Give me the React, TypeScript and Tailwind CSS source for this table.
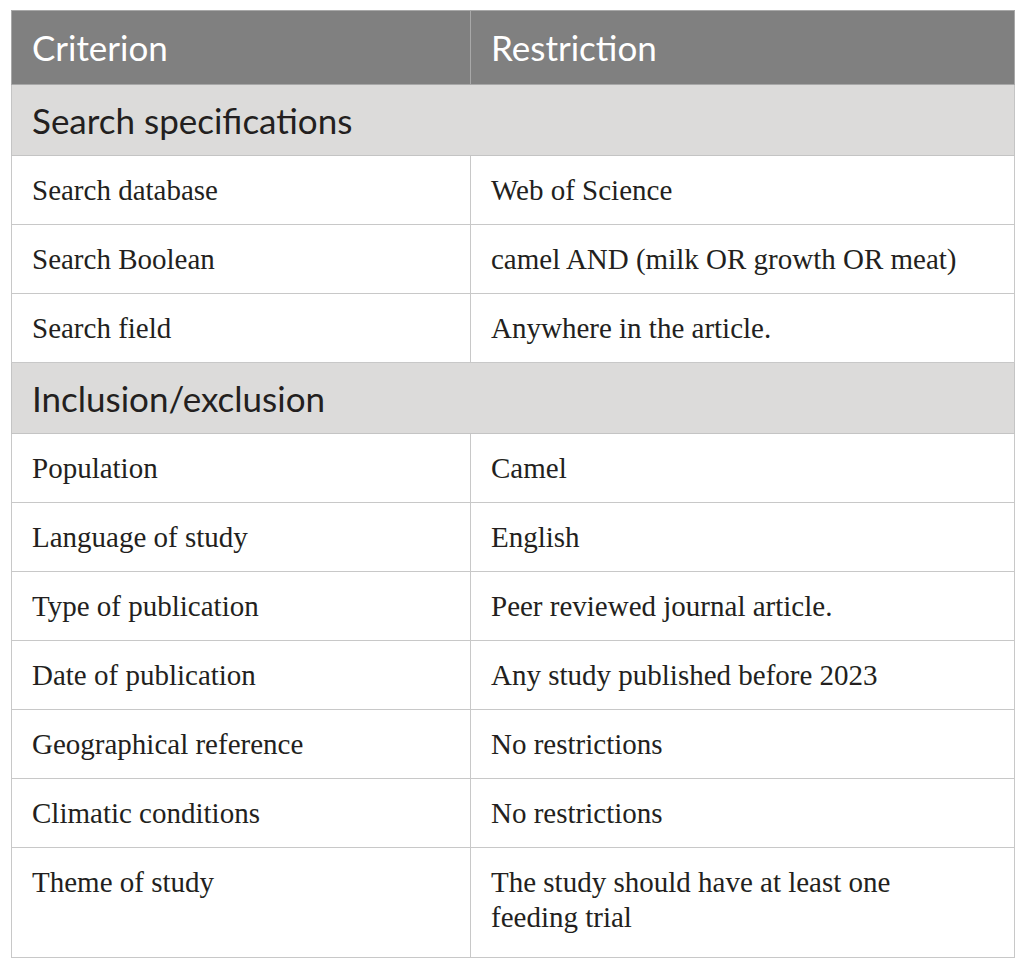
const rows: { section: string; items: [string, React.ReactNode][] }[] = [
  {
    section: 'Search specifications',
    items: [
      ['Search database', 'Web of Science'],
      ['Search Boolean', 'camel AND (milk OR growth OR meat)'],
      ['Search field', 'Anywhere in the article.'],
    ],
  },
  {
    section: 'Inclusion/exclusion',
    items: [
      ['Population', 'Camel'],
      ['Language of study', 'English'],
      ['Type of publication', 'Peer reviewed journal article.'],
      ['Date of publication', 'Any study published before 2023'],
      ['Geographical reference', 'No restrictions'],
      ['Climatic conditions', 'No restrictions'],
      [
        'Theme of study',
        <>
          The study should have at least one
          <br />
          feeding trial
        </>,
      ],
    ],
  },
]

const sans = "font-['Lato','Open_Sans',sans-serif]"
const serif = "font-['Liberation_Serif','DejaVu_Serif',serif]"

export default function App() {
  return (
    <div className="min-h-screen bg-white pt-[10px] pl-[11px]">
      <table className="w-[1003px] table-fixed border-collapse">
        <colgroup>
          <col className="w-[459px]" />
          <col className="w-[544px]" />
        </colgroup>
        <thead>
          <tr className="bg-[#808080] text-white">
            <th className={`${sans} h-[74px] border border-[#a8a8a8] pl-[20px] text-left align-middle text-[35px] font-normal`}>
              Criterion
            </th>
            <th className={`${sans} h-[74px] border border-[#a8a8a8] pl-[20px] text-left align-middle text-[35px] font-normal`}>
              Restriction
            </th>
          </tr>
        </thead>
        <tbody>
          {rows.map((group) => (
            <>
              <tr key={group.section} className="bg-[#dcdbda]">
                <td
                  colSpan={2}
                  className={`${sans} h-[71px] border border-[#c4c4c4] pl-[20px] align-middle text-[35px] text-[#231f20]`}
                >
                  {group.section}
                </td>
              </tr>
              {group.items.map(([label, value], i) => {
                // last row holds two lines and a bit more room below
                const last = i === group.items.length - 1 && group.items.length > 3
                const pad = last ? 'pt-[17px] pb-[22px]' : 'pt-[17px] pb-[16px]'
                return (
                  <tr key={label} className="text-[#231f20]">
                    <td className={`${serif} ${pad} border border-[#c8c8c8] pl-[20px] align-top text-[29px] leading-[35px]`}>
                      {label}
                    </td>
                    <td className={`${serif} ${pad} border border-[#c8c8c8] pl-[20px] align-top text-[29px] leading-[35px]`}>
                      {value}
                    </td>
                  </tr>
                )
              })}
            </>
          ))}
        </tbody>
      </table>
    </div>
  )
}
